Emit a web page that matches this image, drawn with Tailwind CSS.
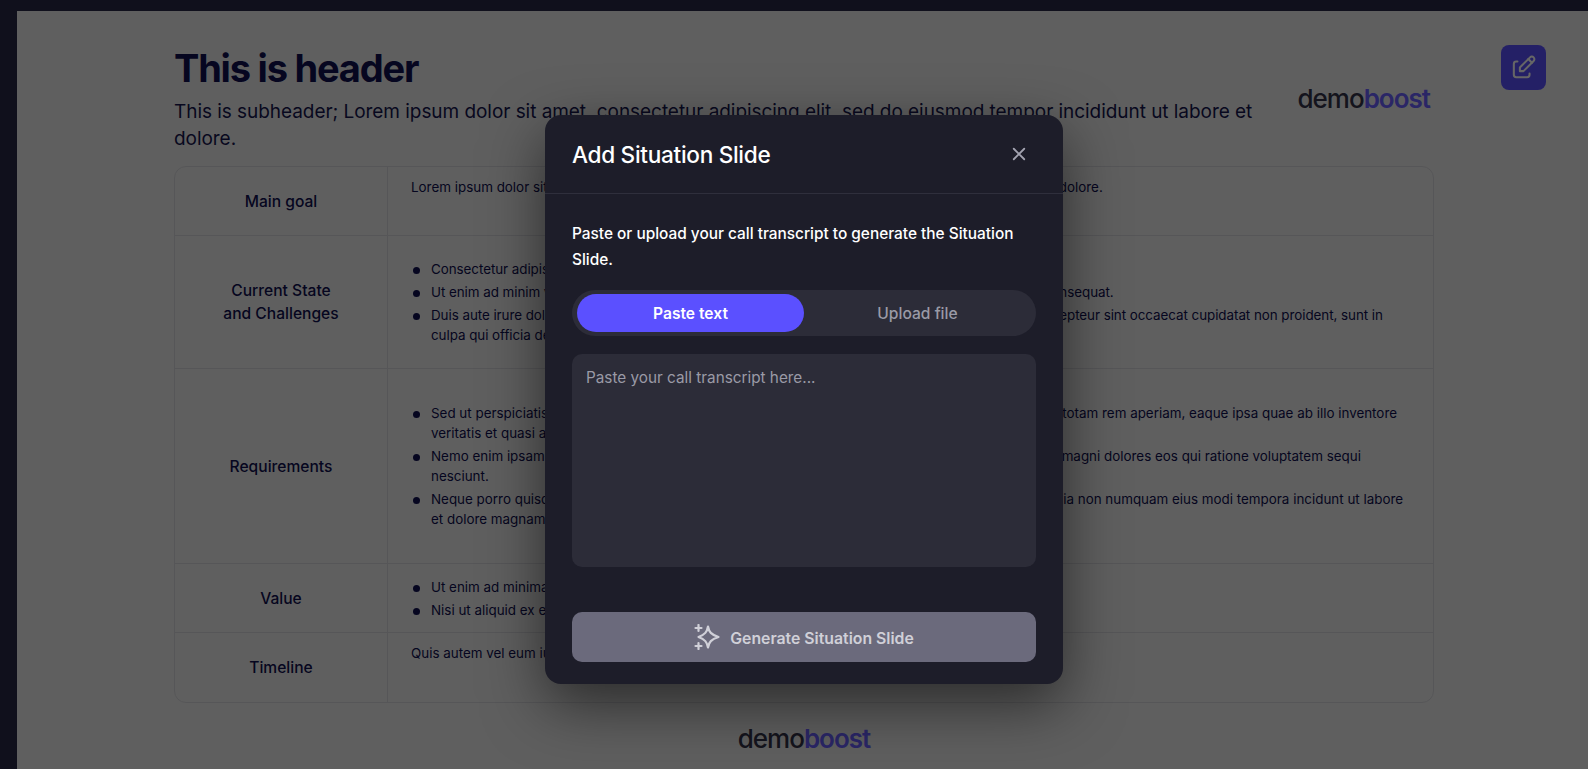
<!DOCTYPE html>
<html lang="en">
<head>
  <meta charset="UTF-8" />
  <meta name="viewport" content="width=device-width, initial-scale=1.0" />
  <title>Add Situation Slide</title>
  <script src="https://cdn.jsdelivr.net/npm/@tailwindcss/browser@4"></script>
</head>
<body class="h-screen overflow-hidden bg-[#282a46] font-['Inter',sans-serif] text-[#0f0f50]">
  <div class="flex h-screen">
    <!-- sidebar strip -->
    <div class="w-[17px] shrink-0 bg-[#282a46]"></div>

    <div class="flex-1 pt-[11px]">
      <main class="relative h-full bg-[#eeeeee] pl-[157px] pr-[154px] pt-[27px]">
        <button class="absolute right-[42px] top-[34px] flex h-[45px] w-[45px] items-center justify-center rounded-lg bg-[#5b50ff] text-white">
          <svg class="h-[29px] w-[29px]" viewBox="0 0 24 24" fill="none" stroke="currentColor" stroke-width="1.7" stroke-linecap="round" stroke-linejoin="round">
            <path d="M7 7h-1a2 2 0 0 0 -2 2v9a2 2 0 0 0 2 2h9a2 2 0 0 0 2 -2v-1" />
            <path d="M20.385 6.585a2.1 2.1 0 0 0 -2.97 -2.97l-8.415 8.385v3h3l8.385 -8.415z" />
            <path d="M16 5l3 3" />
          </svg>
        </button>

        <!-- header -->
        <div class="flex items-start justify-between">
          <div class="w-[1090px]">
            <h1 class="text-[38px] leading-[60px] font-bold tracking-[-1.2px]">This is header</h1>
            <p class="text-[19px] leading-[27px] tracking-[-0.05px] text-[#16164f]">This is subheader; Lorem ipsum dolor sit amet, consectetur adipiscing elit, sed do eiusmod tempor incididunt ut labore et<br />dolore.</p>
          </div>
          <div class="mr-[4px] mt-[46px] text-[26px] leading-[30px] font-medium tracking-[-1px] text-[#33334a]">demo<span class="font-semibold text-[#6a60ff]">boost</span></div>
        </div>

        <!-- table -->
        <div class="mt-[14px] grid grid-cols-[213px_1fr] rounded-xl border border-[#d8d8dc] text-[13.4px] leading-5">
          <div class="flex h-[69px] items-center justify-center border-r border-b border-[#d8d8dc] pt-px text-center text-[15.6px] font-medium">Main goal</div>
          <div class="h-[69px] border-b border-[#d8d8dc] px-[23px] pt-[10px]">Lorem ipsum dolor sit amet, consectetur adipiscing elit, sed do eiusmod tempor incididunt ut labore et dolore.</div>

          <div class="flex h-[133px] items-center justify-center border-r border-b border-[#d8d8dc] text-center text-[15.6px] leading-[23px] font-medium">Current State<br />and Challenges</div>
          <div class="flex h-[133px] items-center border-b border-[#d8d8dc] px-[23px]">
            <ul class="space-y-[3px] pl-5 tracking-[-0.05px] [&>li]:relative [&>li]:before:absolute [&>li]:before:left-[-18px] [&>li]:before:top-[8px] [&>li]:before:h-[7px] [&>li]:before:w-[7px] [&>li]:before:rounded-full [&>li]:before:bg-[#0f0f50]">
              <li>Consectetur adipiscing elit, sed do eiusmod tempor incididunt ut labore et dolore magna aliqua.</li>
              <li>Ut enim ad minim veniam, quis nostrud exercitation ullamco laboris nisi ut aliquip ex ea commodo consequat.</li>
              <li>Duis aute irure dolor in reprehenderit in voluptate velit esse cillum dolore eu fugiat nulla pariatur. Excepteur sint occaecat cupidatat non proident, sunt in<br />culpa qui officia deserunt mollit anim id est laborum.</li>
            </ul>
          </div>

          <div class="flex h-[195px] items-center justify-center border-r border-b border-[#d8d8dc] pt-px text-center text-[15.6px] font-medium">Requirements</div>
          <div class="flex h-[195px] items-center border-b border-[#d8d8dc] px-[23px]">
            <ul class="space-y-[3px] pl-5 [&>li]:relative [&>li]:before:absolute [&>li]:before:left-[-18px] [&>li]:before:top-[8px] [&>li]:before:h-[7px] [&>li]:before:w-[7px] [&>li]:before:rounded-full [&>li]:before:bg-[#0f0f50]">
              <li>Sed ut perspiciatis unde omnis iste natus error sit voluptatem accusantium doloremque laudantium, totam rem aperiam, eaque ipsa quae ab illo inventore<br />veritatis et quasi architecto beatae vitae dicta sunt explicabo.</li>
              <li>Nemo enim ipsam voluptatem quia voluptas sit aspernatur aut odit aut fugit, sed quia consequuntur magni dolores eos qui ratione voluptatem sequi<br />nesciunt.</li>
              <li>Neque porro quisquam est, qui dolorem ipsum quia dolor sit amet, consectetur, adipisci velit, sed quia non numquam eius modi tempora incidunt ut labore<br />et dolore magnam aliquam quaerat voluptatem.</li>
            </ul>
          </div>

          <div class="flex h-[69px] items-center justify-center border-r border-b border-[#d8d8dc] pt-px text-center text-[15.6px] font-medium">Value</div>
          <div class="flex h-[69px] items-center border-b border-[#d8d8dc] px-[23px]">
            <ul class="space-y-[3px] pl-5 [&>li]:relative [&>li]:before:absolute [&>li]:before:left-[-18px] [&>li]:before:top-[8px] [&>li]:before:h-[7px] [&>li]:before:w-[7px] [&>li]:before:rounded-full [&>li]:before:bg-[#0f0f50]">
              <li>Ut enim ad minima veniam, quis nostrum exercitationem ullam corporis suscipit laboriosam.</li>
              <li>Nisi ut aliquid ex ea commodi consequatur.</li>
            </ul>
          </div>

          <div class="flex h-[69px] items-center justify-center border-r border-[#d8d8dc] pt-px text-center text-[15.6px] font-medium">Timeline</div>
          <div class="h-[69px] px-[23px] pt-[10px]">Quis autem vel eum iure reprehenderit qui in ea voluptate velit esse quam nihil molestiae.</div>
        </div>

        <!-- footer logo -->
        <div class="mt-[21px] text-center text-[26px] leading-[30px] font-medium tracking-[-1px] text-[#33334a]">demo<span class="font-semibold text-[#6a60ff]">boost</span></div>
      </main>
    </div>
  </div>

  <!-- overlay -->
  <div class="absolute inset-0 bg-black/60"></div>

  <!-- modal -->
  <div class="absolute left-[545px] top-[115px] w-[518px] rounded-2xl bg-[#1d1d29] text-white shadow-[0_20px_60px_rgba(0,0,0,0.55)]">
    <div class="flex h-[79px] items-center justify-between border-b border-[#2f2f3c] pl-[27px] pr-[28px]">
      <h2 class="pt-[2px] text-[22.6px] font-medium tracking-[-0.3px]">Add Situation Slide</h2>
      <button class="mr-[7px] text-[#a3a3b0]">
        <svg class="h-[18px] w-[18px]" viewBox="0 0 24 24" fill="none" stroke="currentColor" stroke-width="2.4" stroke-linecap="round">
          <path d="M5 5l14 14M19 5L5 19" />
        </svg>
      </button>
    </div>
    <div class="px-[27px] pb-[22px] pt-[27px]">
      <p class="text-[15.4px] leading-[26px] font-medium">Paste or upload your call transcript to generate the Situation<br />Slide.</p>
      <div class="mt-[17px] flex h-[46px] items-center rounded-full bg-[#2c2c38] px-[5px] text-[15.6px]">
        <button class="h-[38px] w-1/2 rounded-full bg-[#5b50ff] pt-px font-semibold text-white">Paste text</button>
        <button class="h-[38px] w-1/2 rounded-full pt-px font-medium text-[#9a9aa6]">Upload file</button>
      </div>
      <textarea class="mt-[18px] block h-[213px] w-full resize-none rounded-[10px] bg-[#2c2c38] px-[14px] py-[12px] text-[15.3px] leading-[24px] placeholder:text-[#9a9aa6]" placeholder="Paste your call transcript here..."></textarea>
      <button class="mt-[45px] flex h-[50px] w-full items-center justify-center gap-[10px] rounded-[10px] bg-[#6b6a7c] text-[15.8px] font-semibold text-[#d0d0d8]">
        <svg class="h-[26px] w-[26px]" viewBox="0 0 26 26" fill="none" stroke="currentColor" stroke-width="2.2" stroke-linecap="round" stroke-linejoin="round">
          <path d="M14 2.500c1 5.500 3 8 10.500 10.500c-7.500 2.500-9.500 5-10.500 10.500c-1-5.500-3-8-9.500-10.500c6.500-2.500 8.500-5 9.500-10.500z" />
          <path d="M4.500 1v6M1.500 4h6M4.500 19v6M1.500 22h6" />
        </svg>
        <span class="pt-[3px]">Generate Situation Slide</span>
      </button>
    </div>
  </div>
</body>
</html>
